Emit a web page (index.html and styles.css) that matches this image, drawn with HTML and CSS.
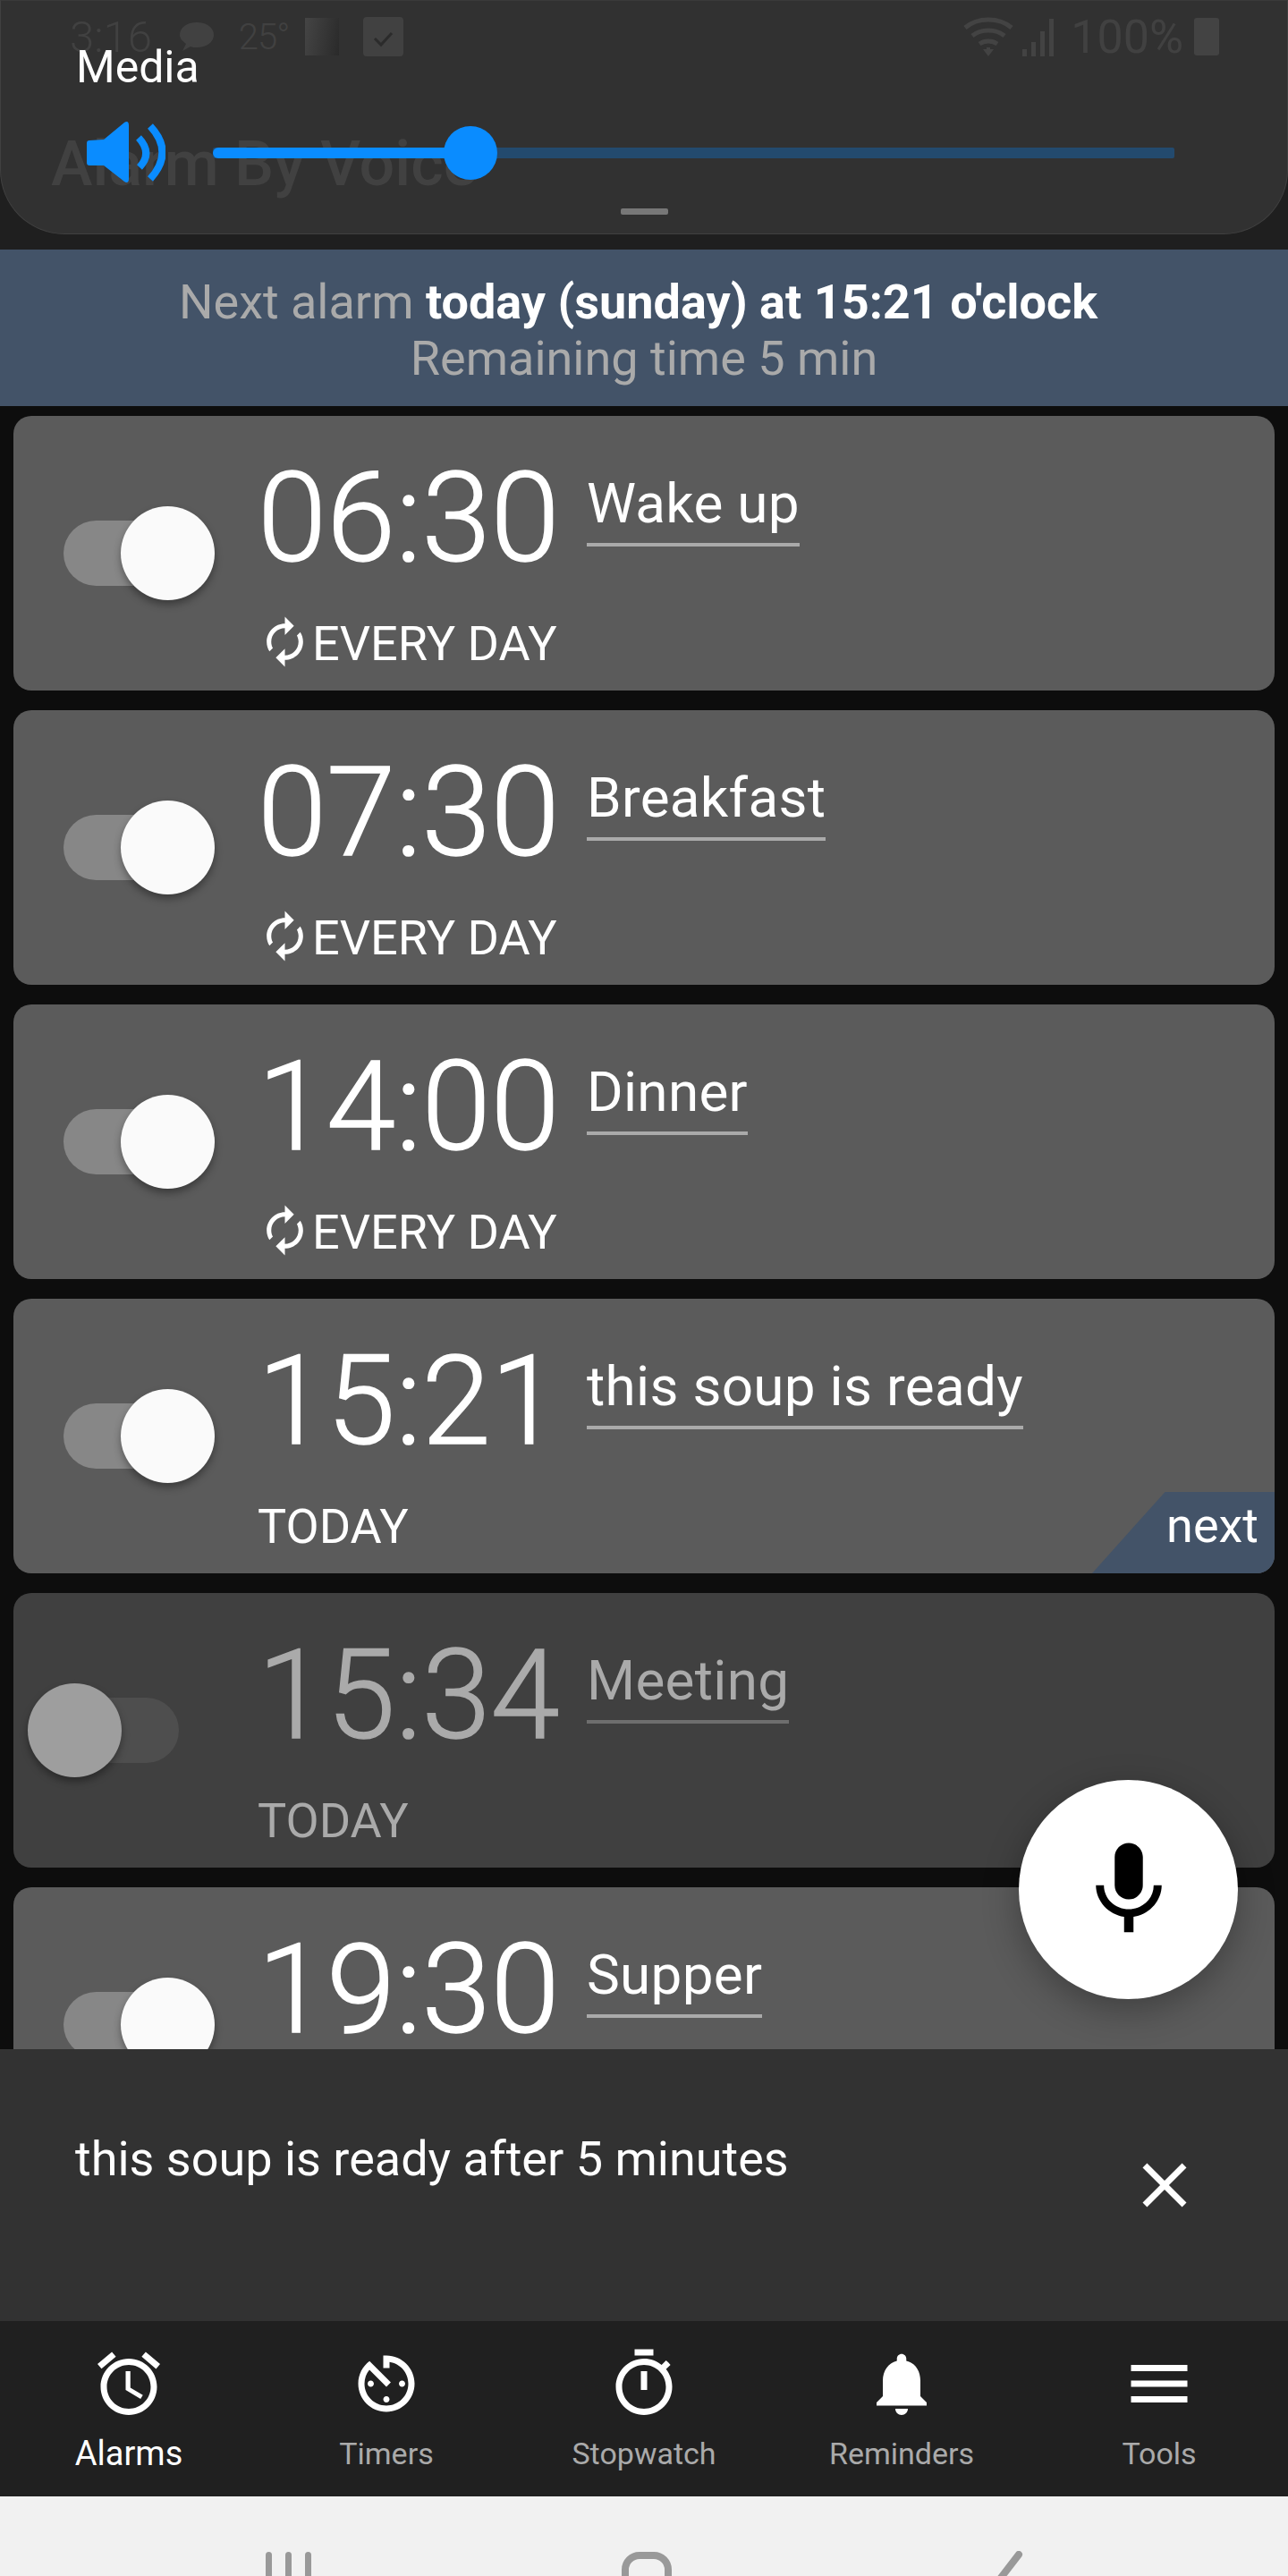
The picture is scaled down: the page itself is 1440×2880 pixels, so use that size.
FILE: index.html
```html
<!DOCTYPE html>
<html lang="en">
<head>
    <meta charset="UTF-8">
    <meta name="viewport" content="width=device-width, initial-scale=1.0">
    <title>Alarm By Voice</title>
    <link rel="stylesheet" href="styles.css">
</head>
<body>
<div class="app">

    <!-- volume panel, the status bar and app title show through it -->
    <div class="panel">
        <div class="ghost">
            <div class="ghost-status">
                <div class="ghost-left">
                    <span class="ghost-clock">3:16</span>
                    <svg class="ghost-bubble" viewBox="0 0 38 32"><path d="M19 0c11 0 19 6 19 14s-8 14-19 14c-3 0-5 0-7-1l-9 5 4-8C3 21 0 18 0 14 0 6 8 0 19 0z"/></svg>
                    <span class="ghost-temp">25°</span>
                    <span class="ghost-square"></span>
                    <span class="ghost-check">
                        <svg viewBox="0 0 45 44"><path d="M13 24l7 7 12-13" fill="none" stroke="#2b2b2b" stroke-width="3"/></svg>
                    </span>
                </div>
                <div class="ghost-right">
                    <svg class="ghost-wifi" viewBox="0 0 58 44"><path d="M2 12C16 0 40 0 54 12M10 21c10-8 26-8 36 0M18 30c6-4 14-4 20 0" fill="none" stroke="#434343" stroke-width="5"/><path d="M28 44l-6-8h4v-2h4v2h4z" fill="#434343"/></svg>
                    <svg class="ghost-signal" viewBox="0 0 36 44"><path d="M0 36h5v8H0zM10 28h5v16h-5zM20 16h5v28h-5zM30 2h5v42h-5z" fill="#434343"/></svg>
                    <span class="ghost-pct">100%</span>
                    <span class="ghost-battery"></span>
                </div>
            </div>
            <div class="ghost-title">Alarm By Voice</div>
        </div>

        <div class="panel-label">Media</div>
        <div class="volume">
            <svg class="volume-icon" viewBox="0 0 90 75">
                <path d="M5 24L21 23 44 4C47 2 49 3 49 7V67C49 71 47 72 44 70L21 52H5C3 52 2 51 2 49V27C2 25 3 24 5 24Z" fill="#0a8cff"/>
                <path d="M60 21Q76 38 61 54M73 8Q100 37 73 67" fill="none" stroke="#0a8cff" stroke-width="8"/>
            </svg>
            <div class="slider">
                <div class="slider-fill" style="width: 288px"><span class="slider-thumb"></span></div>
            </div>
        </div>
        <div class="panel-handle"></div>
    </div>
    <div class="strip"></div>

    <div class="banner">
        <div class="banner-next">Next alarm <b>today (sunday) at 15:21 o'clock</b></div>
        <div>Remaining time 5 min</div>
    </div>

    <div class="list">
        <div class="card">
            <div class="toggle on"><span class="thumb"></span></div>
            <div class="card-main">
                <div class="card-top">
                    <div class="time">06:30</div>
                    <div class="name">Wake up</div>
                </div>
                <div class="repeat">
                    <svg class="sync" viewBox="0 0 24 24"><path d="M12 6v3l4-4-4-4v3c-4.42 0-8 3.58-8 8 0 1.57.46 3.03 1.24 4.26L6.7 14.8c-.45-.83-.7-1.79-.7-2.8 0-3.31 2.69-6 6-6zm6.76 1.74L17.3 9.2c.44.84.7 1.79.7 2.8 0 3.31-2.69 6-6 6v-3l-4 4 4 4v-3c4.42 0 8-3.58 8-8 0-1.57-.46-3.03-1.24-4.26z"/></svg>
                    <span>EVERY DAY</span>
                </div>
            </div>
        </div>

        <div class="card">
            <div class="toggle on"><span class="thumb"></span></div>
            <div class="card-main">
                <div class="card-top">
                    <div class="time">07:30</div>
                    <div class="name">Breakfast</div>
                </div>
                <div class="repeat">
                    <svg class="sync" viewBox="0 0 24 24"><path d="M12 6v3l4-4-4-4v3c-4.42 0-8 3.58-8 8 0 1.57.46 3.03 1.24 4.26L6.7 14.8c-.45-.83-.7-1.79-.7-2.8 0-3.31 2.69-6 6-6zm6.76 1.74L17.3 9.2c.44.84.7 1.79.7 2.8 0 3.31-2.69 6-6 6v-3l-4 4 4 4v-3c4.42 0 8-3.58 8-8 0-1.57-.46-3.03-1.24-4.26z"/></svg>
                    <span>EVERY DAY</span>
                </div>
            </div>
        </div>

        <div class="card">
            <div class="toggle on"><span class="thumb"></span></div>
            <div class="card-main">
                <div class="card-top">
                    <div class="time">14:00</div>
                    <div class="name">Dinner</div>
                </div>
                <div class="repeat">
                    <svg class="sync" viewBox="0 0 24 24"><path d="M12 6v3l4-4-4-4v3c-4.42 0-8 3.58-8 8 0 1.57.46 3.03 1.24 4.26L6.7 14.8c-.45-.83-.7-1.79-.7-2.8 0-3.31 2.69-6 6-6zm6.76 1.74L17.3 9.2c.44.84.7 1.79.7 2.8 0 3.31-2.69 6-6 6v-3l-4 4 4 4v-3c4.42 0 8-3.58 8-8 0-1.57-.46-3.03-1.24-4.26z"/></svg>
                    <span>EVERY DAY</span>
                </div>
            </div>
        </div>

        <div class="card">
            <div class="toggle on"><span class="thumb"></span></div>
            <div class="card-main">
                <div class="card-top">
                    <div class="time">15:21</div>
                    <div class="name">this soup is ready</div>
                </div>
                <div class="repeat"><span>TODAY</span></div>
            </div>
            <div class="next-tag">next</div>
        </div>

        <div class="card off">
            <div class="toggle"><span class="thumb"></span></div>
            <div class="card-main">
                <div class="card-top">
                    <div class="time">15:34</div>
                    <div class="name">Meeting</div>
                </div>
                <div class="repeat"><span>TODAY</span></div>
            </div>
        </div>

        <div class="card">
            <div class="toggle on"><span class="thumb"></span></div>
            <div class="card-main">
                <div class="card-top">
                    <div class="time">19:30</div>
                    <div class="name">Supper</div>
                </div>
            </div>
        </div>
    </div>

    <button class="fab" type="button">
        <svg viewBox="0 0 24 24"><path d="M12 14c1.66 0 2.99-1.34 2.99-3L15 5c0-1.66-1.34-3-3-3S9 3.34 9 5v6c0 1.66 1.34 3 3 3zm5.3-3c0 3-2.54 5.1-5.3 5.1S6.7 14 6.7 11H5c0 3.41 2.72 6.23 6 6.72V21h2v-3.28c3.28-.48 6-3.3 6-6.72h-1.7z"/></svg>
    </button>

    <div class="snackbar">
        <div class="snack-text">this soup is ready after 5 minutes</div>
        <svg class="snack-close" viewBox="0 0 24 24"><path d="M19 6.41L17.59 5 12 10.59 6.41 5 5 6.41 10.59 12 5 17.59 6.41 19 12 13.41 17.59 19 19 17.59 13.41 12z"/></svg>
    </div>

    <div class="tabs">
        <div class="tab active">
            <svg viewBox="0 0 24 24"><path d="M22 5.72l-4.6-3.86-1.29 1.53 4.6 3.86L22 5.72zM7.88 3.39L6.6 1.86 2 5.71l1.29 1.53 4.59-3.85zM12.5 8H11v6l4.75 2.85.75-1.23-4-2.37V8zM12 4c-4.97 0-9 4.03-9 9s4.03 9 9 9 9-4.03 9-9-4.03-9-9-9zm0 16c-3.87 0-7-3.13-7-7s3.13-7 7-7 7 3.13 7 7-3.13 7-7 7z"/></svg>
            <span>Alarms</span>
        </div>
        <div class="tab">
            <svg viewBox="0 0 24 24"><path d="M11 17c0 .55.45 1 1 1s1-.45 1-1-.45-1-1-1-1 .45-1 1zm0-14v4h2V5.08c3.39.49 6 3.39 6 6.92 0 3.87-3.13 7-7 7s-7-3.13-7-7c0-1.68.59-3.22 1.58-4.42L12 13l1.41-1.41-6.8-6.8v.02C4.42 6.45 3 9.05 3 12c0 4.97 4.02 9 9 9 4.97 0 9-4.03 9-9s-4.03-9-9-9h-1zm7 9c0-.55-.45-1-1-1s-1 .45-1 1 .45 1 1 1 1-.45 1-1zM6 12c0 .55.45 1 1 1s1-.45 1-1-.45-1-1-1-1 .45-1 1z"/></svg>
            <span>Timers</span>
        </div>
        <div class="tab">
            <svg viewBox="0 0 24 24"><path d="M15 1H9v2h6V1zm-4 13h2V8h-2v6zm8.03-6.61l1.42-1.42c-.43-.51-.9-.99-1.41-1.41l-1.42 1.42C16.07 4.74 14.12 4 12 4c-4.97 0-9 4.03-9 9s4.02 9 9 9 9-4.03 9-9c0-2.12-.74-4.07-1.97-5.61zM12 20c-3.87 0-7-3.13-7-7s3.13-7 7-7 7 3.13 7 7-3.13 7-7 7z"/></svg>
            <span>Stopwatch</span>
        </div>
        <div class="tab">
            <svg viewBox="0 0 24 24"><path d="M12 22c1.1 0 2-.9 2-2h-4c0 1.1.89 2 2 2zm6-6v-5c0-3.07-1.64-5.64-4.5-6.32V4c0-.83-.67-1.5-1.5-1.5s-1.5.67-1.5 1.5v.68C7.63 5.36 6 7.92 6 11v5l-2 2v1h16v-1l-2-2z"/></svg>
            <span>Reminders</span>
        </div>
        <div class="tab">
            <svg viewBox="0 0 24 24"><path d="M3 18h18v-2H3v2zm0-5h18v-2H3v2zm0-7v2h18V6H3z"/></svg>
            <span>Tools</span>
        </div>
    </div>

    <div class="sysnav">
        <div class="sys-recent"><span></span><span></span><span></span></div>
        <div class="sys-home"></div>
        <svg class="sys-back" viewBox="0 0 60 28"><path d="M54 4L34 30" fill="none" stroke="#999" stroke-width="8" stroke-linecap="round"/></svg>
    </div>
</div>
</body>
</html>
```

FILE: styles.css
```css
body {
    margin: 0;
    background-color: #0d0d0d;
    font-family: Roboto, "Liberation Sans", sans-serif;
    color: #fff;
}
.app {
    position: relative;
    display: flex;
    flex-direction: column;
    width: 1440px;
    height: 2880px;
    overflow: hidden;
}

/* volume panel */
.panel {
    position: relative;
    box-sizing: border-box;
    height: 262px;
    padding: 44px 0 0 84px;
    background-color: #313131;
    border: 1px solid #404040;
    border-top-color: #3a3a3a;
    border-radius: 0 0 72px 72px;
    flex-shrink: 0;
}
.strip {
    height: 17px;
    margin-top: -72px;
    padding-top: 72px;
    background-color: #1f1f1f;
    flex-shrink: 0;
    position: relative;
    z-index: -1;
}
.panel-label {
    position: relative;
    font-size: 50px;
    line-height: 60px;
}
.volume {
    position: relative;
    display: flex;
    align-items: center;
    margin-top: 28px;
    margin-left: 10px;
}
.volume-icon {
    width: 90px;
    height: 75px;
    flex-shrink: 0;
}
.slider {
    width: 1075px;
    height: 12px;
    margin-left: 53px;
    border-radius: 2px;
    background-color: #234a6e;
}
.slider-fill {
    position: relative;
    height: 12px;
    border-radius: 6px 0 0 6px;
    background-color: #0a8cff;
}
.slider-thumb {
    position: absolute;
    top: -24px;
    right: -30px;
    width: 60px;
    height: 60px;
    border-radius: 50%;
    background-color: #0a8cff;
}
.panel-handle {
    position: absolute;
    left: 693px;
    top: 232px;
    width: 53px;
    height: 7px;
    border-radius: 2px;
    background-color: #777;
}

/* what shows through the panel */
.ghost {
    position: absolute;
    inset: 0;
    color: #414141;
}
.ghost-status {
    display: flex;
    justify-content: space-between;
    align-items: center;
    height: 44px;
    padding: 18px 76px 0 77px;
}
.ghost-left, .ghost-right {
    display: flex;
    align-items: center;
}
.ghost-clock {
    font-size: 49px;
    font-weight: 300;
}
.ghost-bubble {
    width: 38px;
    height: 32px;
    margin-left: 31px;
    fill: #414141;
}
.ghost-temp {
    font-size: 40px;
    font-weight: 300;
    letter-spacing: -1px;
    margin-left: 28px;
}
.ghost-square {
    width: 38px;
    height: 42px;
    margin-left: 18px;
    background: linear-gradient(100deg, #454545, #2a2a2a);
}
.ghost-check {
    width: 45px;
    height: 44px;
    margin-left: 27px;
    border-radius: 4px;
    background-color: #414141;
}
.ghost-wifi {
    width: 58px;
    height: 44px;
}
.ghost-signal {
    width: 36px;
    height: 44px;
    margin-left: 8px;
}
.ghost-pct {
    font-size: 52px;
    margin-left: 18px;
}
.ghost-battery {
    width: 28px;
    height: 42px;
    margin-left: 12px;
    border-radius: 3px;
    background-color: #434343;
}
.ghost-title {
    position: absolute;
    left: 56px;
    top: 140px;
    font-size: 70px;
    line-height: 84px;
    font-weight: 500;
}

/* next alarm banner */
.banner {
    height: 175px;
    box-sizing: border-box;
    padding-top: 27px;
    flex-shrink: 0;
    background-color: #435368;
    color: #aaa;
    font-size: 54px;
    line-height: 63px;
    text-align: center;
}
.banner-next {
    padding-right: 13px;
}
.banner b {
    color: #fff;
    font-weight: 700;
}

/* alarm cards */
.list {
    flex: 1;
    min-height: 0;
    overflow: hidden;
    display: flex;
    flex-direction: column;
    gap: 22px;
    padding: 11px 15px 0;
}
.card {
    position: relative;
    display: flex;
    align-items: flex-start;
    height: 307px;
    flex-shrink: 0;
    overflow: hidden;
    border-radius: 20px;
    background-color: #5b5b5b;
}
.card.off {
    background-color: #404040;
    color: #aaa;
}
.toggle {
    position: relative;
    width: 129px;
    height: 73px;
    margin: 117px 0 0 56px;
    flex-shrink: 0;
    border-radius: 37px;
    background-color: #4e4e4e;
}
.toggle.on {
    background-color: #878787;
}
.thumb {
    position: absolute;
    top: -16px;
    left: -40px;
    width: 105px;
    height: 105px;
    border-radius: 50%;
    background-color: #9e9e9e;
    box-shadow: 0 5px 8px rgba(0, 0, 0, 0.35);
}
.toggle.on .thumb {
    left: 64px;
    background-color: #fafafa;
}
.card-main {
    margin-left: 88px;
}
.card-top {
    display: flex;
    align-items: flex-start;
}
.time {
    width: 368px;
    margin-top: 45px;
    font-size: 139px;
    line-height: 140px;
    font-weight: 300;
    -webkit-text-stroke: 1.5px currentColor;
}
.name {
    margin-top: 62px;
    padding-bottom: 8px;
    border-bottom: 4px solid #aaa;
    font-size: 62px;
    line-height: 72px;
    font-weight: 400;
    letter-spacing: 0.3px;
}
.card.off .name {
    border-bottom-color: #6e6e6e;
}
.repeat {
    position: absolute;
    left: 273px;
    top: 225px;
    display: flex;
    align-items: flex-start;
    font-size: 54px;
    line-height: 60px;
    font-weight: 400;
}
.sync {
    width: 61px;
    height: 61px;
    margin-top: -3px;
    fill: #fff;
}
.next-tag {
    position: absolute;
    right: 0;
    bottom: 0;
    box-sizing: border-box;
    width: 204px;
    height: 91px;
    padding: 8px 18px 0 0;
    background-color: #435368;
    clip-path: polygon(40% 0, 100% 0, 100% 100%, 0 100%);
    font-size: 54px;
    line-height: 60px;
    text-align: right;
}

/* mic button */
.fab {
    position: absolute;
    left: 1139px;
    top: 1990px;
    width: 245px;
    height: 245px;
    padding: 0;
    border: none;
    border-radius: 50%;
    display: flex;
    align-items: center;
    justify-content: center;
    background-color: #fff;
    box-shadow: 0 12px 40px rgba(0, 0, 0, 0.3);
}
.fab svg {
    width: 126px;
    height: 126px;
    fill: #000;
}

/* snackbar */
.snackbar {
    display: flex;
    justify-content: space-between;
    align-items: flex-start;
    box-sizing: border-box;
    height: 304px;
    padding: 93px 96px 0 84px;
    flex-shrink: 0;
    background-color: #323232;
    position: relative;
}
.snack-text {
    font-size: 54px;
    line-height: 60px;
}
.snack-close {
    width: 84px;
    height: 84px;
    margin-top: 17px;
    fill: #fff;
}

/* bottom tabs */
.tabs {
    display: flex;
    height: 196px;
    flex-shrink: 0;
    box-sizing: border-box;
    padding-top: 28px;
    background-color: #202020;
}
.tab {
    width: 288px;
    display: flex;
    flex-direction: column;
    align-items: center;
    color: #aaa;
    font-size: 34px;
    line-height: 44px;
}
.tab svg {
    width: 84px;
    height: 84px;
    fill: #fff;
}
.tab span {
    margin-top: 14px;
}
.tab.active {
    color: #fff;
    font-size: 38px;
}

/* system navigation */
.sysnav {
    display: flex;
    height: 89px;
    flex-shrink: 0;
    box-sizing: border-box;
    padding: 62px 0 0 297px;
    overflow: hidden;
    background-color: #f1f1f1;
}
.sys-recent {
    display: flex;
    gap: 15px;
    width: 52px;
}
.sys-recent span {
    width: 7px;
    height: 60px;
    border-radius: 4px;
    background-color: #999;
}
.sys-home {
    box-sizing: border-box;
    width: 56px;
    height: 70px;
    margin-left: 346px;
    border: 8px solid #999;
    border-radius: 20px;
}
.sys-back {
    width: 60px;
    height: 28px;
    margin-left: 334px;
    margin-top: -1px;
}
```
